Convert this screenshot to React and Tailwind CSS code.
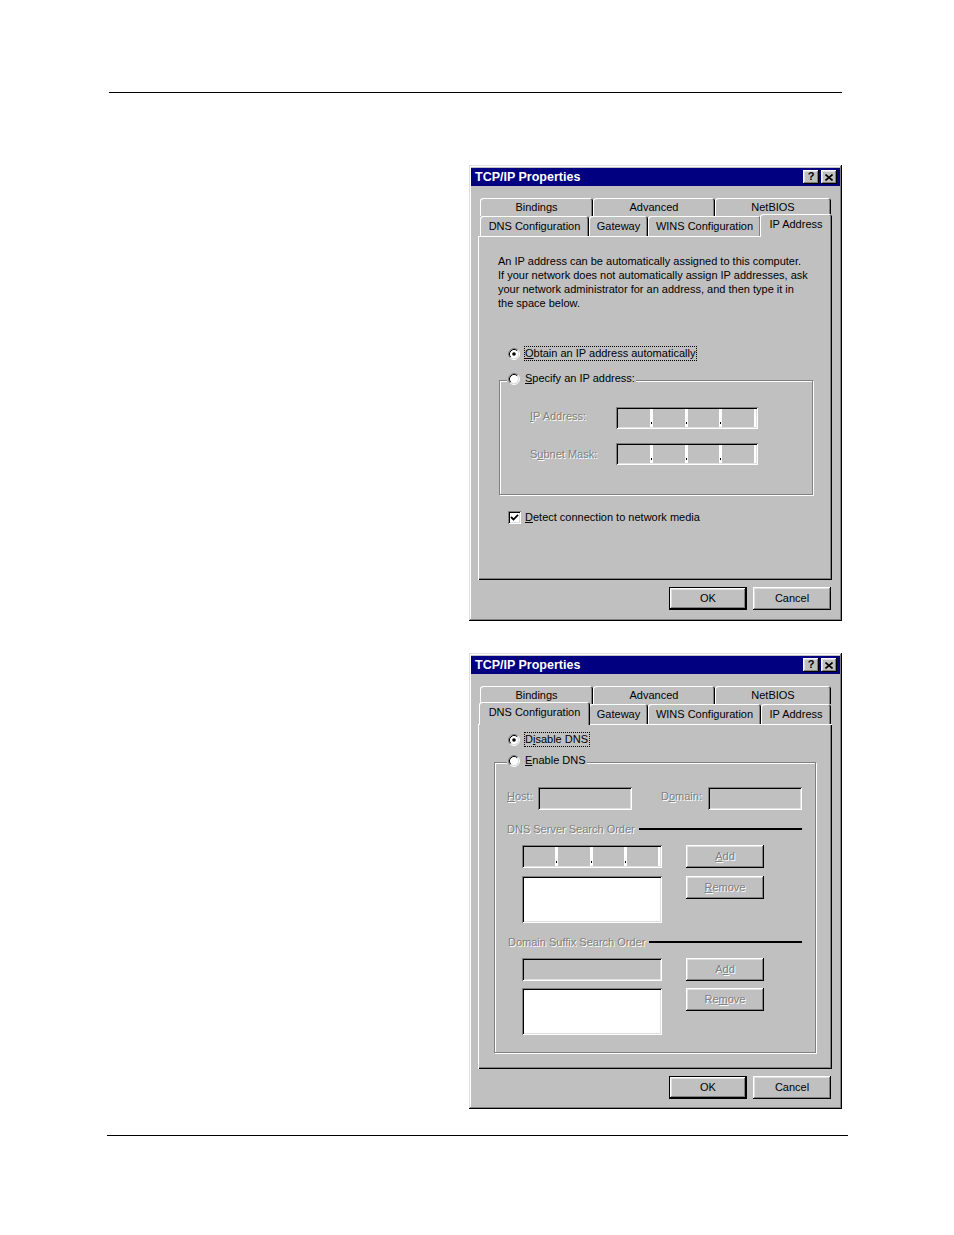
import React from "react";

const raised =
  "shadow-[inset_-1px_-1px_0_#000,inset_1px_1px_0_#fff,inset_-2px_-2px_0_#808080,inset_2px_2px_0_#dfdfdf]";
const sunken =
  "shadow-[inset_1px_1px_0_#808080,inset_-1px_-1px_0_#fff,inset_2px_2px_0_#000,inset_-2px_-2px_0_#dfdfdf]";
const etched = "border border-[#808080] shadow-[1px_1px_0_#fff,inset_1px_1px_0_#fff]";
const dis = "text-[#808080] [text-shadow:1px_1px_0_#fff]";
const panelShadow =
  "shadow-[inset_1px_1px_0_#fff,inset_-1px_-1px_0_#000,inset_-2px_-2px_0_#808080]";

function Radio({ checked }) {
  return (
    <svg width="12" height="12" viewBox="0 0 12 12" className="shrink-0">
      <circle cx="6" cy="6" r="4.5" fill="#fff" />
      <path d="M9.89 2.11 A5.5 5.5 0 0 0 2.11 9.89" stroke="#808080" fill="none" />
      <path d="M9.18 2.82 A4.5 4.5 0 0 0 2.82 9.18" stroke="#000" fill="none" />
      <path d="M2.11 9.89 A5.5 5.5 0 0 0 9.89 2.11" stroke="#fff" fill="none" />
      <path d="M2.82 9.18 A4.5 4.5 0 0 0 9.18 2.82" stroke="#dfdfdf" fill="none" />
      {checked && <circle cx="6" cy="6" r="1.8" fill="#000" />}
    </svg>
  );
}

function Check() {
  return (
    <div className={`w-[13px] h-[13px] bg-white shrink-0 ${sunken} flex items-center justify-center`}>
      <svg width="9" height="9" viewBox="0 0 9 9">
        <polyline points="1,4 3.5,6.5 8,1.8" stroke="#000" strokeWidth="1.8" fill="none" />
      </svg>
    </div>
  );
}

function TitleBar() {
  return (
    <div className="h-[18px] bg-[#000080] flex items-center justify-between pl-[4px] pr-[3px]">
      <span className="text-white font-bold text-[12.5px] leading-none">TCP/IP Properties</span>
      <div className="flex gap-[2px]">
        <div className={`w-[16px] h-[14px] bg-[#c0c0c0] ${raised} flex items-center justify-center text-[11px] font-bold leading-none text-black pb-[1px]`}>
          ?
        </div>
        <div className={`w-[16px] h-[14px] bg-[#c0c0c0] ${raised} flex items-center justify-center`}>
          <svg width="8" height="7" viewBox="0 0 8 7">
            <path d="M0.5 0.5 L7.5 6.5 M7.5 0.5 L0.5 6.5" stroke="#000" strokeWidth="1.6" />
          </svg>
        </div>
      </div>
    </div>
  );
}

function Tab({ label, w, sel }) {
  return (
    <div
      className={`${w} bg-[#c0c0c0] rounded-t-[3px] flex items-center justify-center text-[11px] leading-none shadow-[inset_1px_1px_0_#fff,inset_-1px_0_0_#000,inset_-2px_0_0_#808080] ${
        sel ? "relative z-10 -mt-[2px] -mb-[1px] -mx-[1px] pb-[2px]" : ""
      }`}
    >
      {label}
    </div>
  );
}

function Tabs({ sel }) {
  return (
    <div className="ml-[2px]">
      <div className="flex h-[18px]">
        <Tab label="Bindings" w="w-[113px]" />
        <Tab label="Advanced" w="w-[122px]" />
        <Tab label="NetBIOS" w="w-[116px]" />
      </div>
      <div className="flex h-[20px]">
        <Tab label="DNS Configuration" w={sel === "dns" ? "w-[111px]" : "w-[109px]"} sel={sel === "dns"} />
        <Tab label="Gateway" w="w-[59px]" />
        <Tab label="WINS Configuration" w="w-[113px]" />
        <Tab label="IP Address" w={sel === "ip" ? "w-[72px]" : "w-[70px]"} sel={sel === "ip"} />
      </div>
    </div>
  );
}

function Btn({ children, def, disabled }) {
  return (
    <div
      className={`w-[78px] h-[23px] bg-[#c0c0c0] flex items-center justify-center text-[11px] ${
        def ? "border border-black" : ""
      } ${raised} ${disabled ? dis : "text-black"}`}
    >
      {children}
    </div>
  );
}

function IPField({ w, h }) {
  const Sep = () => (
    <div className="w-[3px] bg-white flex items-end justify-center pb-[3px]">
      <div className="w-[1px] h-[2px] bg-black" />
    </div>
  );
  return (
    <div className={`${w} ${h} ${sunken} bg-[#c0c0c0] p-[2px] flex`}>
      <div className="flex-1" />
      <Sep />
      <div className="flex-1" />
      <Sep />
      <div className="flex-1" />
      <Sep />
      <div className="flex-1" />
      <div className="w-[2px] bg-white" />
    </div>
  );
}

function Dialog({ sel, panelH, children }) {
  return (
    <div
      className={`w-[373px] h-[456px] bg-[#c0c0c0] px-[2px] pt-[3px] flex flex-col shadow-[inset_-1px_-1px_0_#000,inset_1px_1px_0_#dfdfdf,inset_-2px_-2px_0_#808080,inset_2px_2px_0_#fff]`}
    >
      <TitleBar />
      <div className="ml-[7px] mt-[12px] w-[354px]">
        <Tabs sel={sel} />
        <div className={`w-[354px] ${panelH} ${panelShadow}`}>{children}</div>
        <div className="flex justify-end gap-[6px] mt-[7px] pr-[1px]">
          <Btn def>OK</Btn>
          <Btn>Cancel</Btn>
        </div>
      </div>
    </div>
  );
}

function Panel1() {
  return (
    <div className="pt-[18px] text-[11px] text-black">
      <p className="pl-[20px] leading-[14px] whitespace-nowrap">
        An IP address can be automatically assigned to this computer.
        <br />
        If your network does not automatically assign IP addresses, ask
        <br />
        your network administrator for an address, and then type it in
        <br />
        the space below.
      </p>
      <div className="mt-[36px] ml-[30px] flex items-center h-[15px]">
        <Radio checked />
        <span className="ml-[4px] border border-dotted border-black leading-[13px] pr-[1px]">
          <u>O</u>btain an IP address automatically
        </span>
      </div>
      <div className={`relative mt-[19px] ml-[21px] w-[314px] h-[115px] ${etched} pt-[26px]`}>
        <div className="absolute left-[7px] -top-[10px] h-[15px] flex items-center bg-[#c0c0c0] pl-[1px] pr-[1px]">
          <Radio />
          <span className="ml-[5px]">
            <u>S</u>pecify an IP address:
          </span>
        </div>
        <div className="flex items-center ml-[30px]">
          <span className={`w-[86px] ${dis} -mt-[3px]`}>
            <u>I</u>P Address:
          </span>
          <IPField w="w-[142px]" h="h-[22px]" />
        </div>
        <div className="flex items-center ml-[30px] mt-[14px]">
          <span className={`w-[86px] ${dis}`}>
            S<u>u</u>bnet Mask:
          </span>
          <IPField w="w-[142px]" h="h-[22px]" />
        </div>
      </div>
      <div className="mt-[15px] ml-[30px] flex items-center h-[14px]">
        <Check />
        <span className="ml-[4px]">
          <u>D</u>etect connection to network media
        </span>
      </div>
    </div>
  );
}

function Panel2() {
  return (
    <div className="pt-[8px] text-[11px] text-black">
      <div className="ml-[30px] flex items-center h-[15px]">
        <Radio checked />
        <span className="ml-[4px] border border-dotted border-black leading-[13px] pr-[1px]">
          D<u>i</u>sable DNS
        </span>
      </div>
      <div className={`relative mt-[15px] ml-[16px] w-[322px] h-[291px] ${etched} pt-[24px] pl-[12px]`}>
        <div className="absolute left-[12px] -top-[10px] h-[15px] flex items-center bg-[#c0c0c0] pl-[1px] pr-[1px]">
          <Radio />
          <span className="ml-[5px]">
            <u>E</u>nable DNS
          </span>
        </div>
        <div className="flex items-center h-[23px]">
          <span className={`w-[31px] ${dis} -mt-[4px]`}>
            <u>H</u>ost:
          </span>
          <div className={`w-[94px] h-[23px] ${sunken} bg-[#c0c0c0]`} />
          <span className={`ml-[29px] w-[47px] ${dis} -mt-[4px]`}>
            D<u>o</u>main:
          </span>
          <div className={`w-[94px] h-[23px] ${sunken} bg-[#c0c0c0]`} />
        </div>
        <div className="mt-[12px] flex items-center w-[295px] h-[14px]">
          <span className={`${dis} whitespace-nowrap`}>DNS Server Search Order</span>
          <div className="ml-[4px] flex-1 h-[2px] bg-black" />
        </div>
        <div className="flex mt-[9px] ml-[15px]">
          <div className="flex flex-col">
            <IPField w="w-[140px]" h="h-[23px]" />
            <div className={`mt-[8px] w-[140px] h-[47px] bg-white ${sunken}`} />
          </div>
          <div className="ml-[24px] flex flex-col">
            <Btn disabled>
              <u>A</u>dd
            </Btn>
            <div className="mt-[8px]">
              <Btn disabled>
                <u>R</u>emove
              </Btn>
            </div>
          </div>
        </div>
        <div className="mt-[12px] ml-[1px] flex items-center w-[294px] h-[14px]">
          <span className={`${dis} whitespace-nowrap`}>Domain Suffix Search Order</span>
          <div className="ml-[4px] flex-1 h-[2px] bg-black" />
        </div>
        <div className="flex mt-[9px] ml-[15px]">
          <div className="flex flex-col">
            <div className={`w-[140px] h-[23px] bg-[#c0c0c0] ${sunken}`} />
            <div className={`mt-[7px] w-[140px] h-[47px] bg-white ${sunken}`} />
          </div>
          <div className="ml-[24px] flex flex-col">
            <Btn disabled>
              A<u>d</u>d
            </Btn>
            <div className="mt-[7px]">
              <Btn disabled>
                Re<u>m</u>ove
              </Btn>
            </div>
          </div>
        </div>
      </div>
    </div>
  );
}

export default function App() {
  return (
    <div className="w-[954px] min-h-[1235px] bg-white font-['Liberation_Sans',Arial,sans-serif] pt-[92px]">
      <div className="ml-[109px] w-[733px] h-[1px] bg-black" />
      <div className="ml-[469px] mt-[72px]">
        <Dialog sel="ip" panelH="h-[344px]">
          <Panel1 />
        </Dialog>
      </div>
      <div className="ml-[469px] mt-[32px]">
        <Dialog sel="dns" panelH="h-[345px]">
          <Panel2 />
        </Dialog>
      </div>
      <div className="ml-[107px] w-[741px] h-[1px] bg-black mt-[26px]" />
    </div>
  );
}
